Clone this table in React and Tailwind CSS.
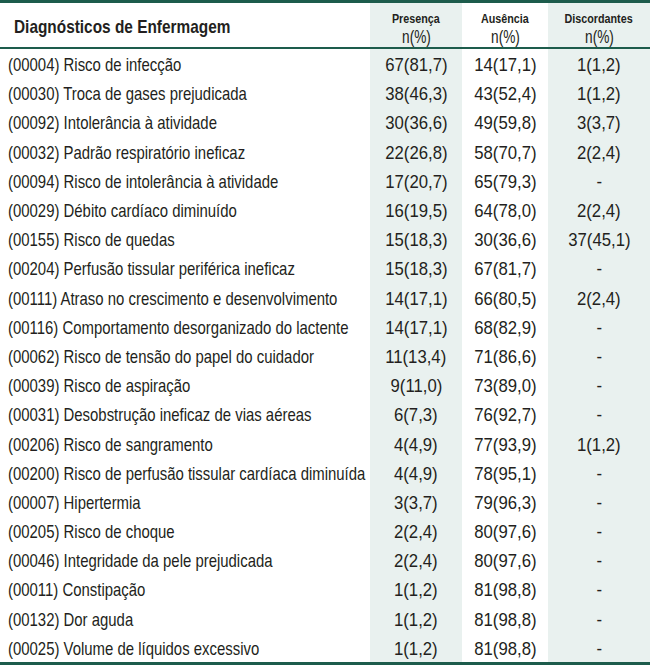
import React from "react";

const rows = [
    ["(00004) Risco de infecção", "67(81,7)", "14(17,1)", "1(1,2)"],
    ["(00030) Troca de gases prejudicada", "38(46,3)", "43(52,4)", "1(1,2)"],
    ["(00092) Intolerância à atividade", "30(36,6)", "49(59,8)", "3(3,7)"],
    ["(00032) Padrão respiratório ineficaz", "22(26,8)", "58(70,7)", "2(2,4)"],
    ["(00094) Risco de intolerância à atividade", "17(20,7)", "65(79,3)", "-"],
    ["(00029) Débito cardíaco diminuído", "16(19,5)", "64(78,0)", "2(2,4)"],
    ["(00155) Risco de quedas", "15(18,3)", "30(36,6)", "37(45,1)"],
    ["(00204) Perfusão tissular periférica ineficaz", "15(18,3)", "67(81,7)", "-"],
    ["(00111) Atraso no crescimento e desenvolvimento", "14(17,1)", "66(80,5)", "2(2,4)"],
    ["(00116) Comportamento desorganizado do lactente", "14(17,1)", "68(82,9)", "-"],
    ["(00062) Risco de tensão do papel do cuidador", "11(13,4)", "71(86,6)", "-"],
    ["(00039) Risco de aspiração", "9(11,0)", "73(89,0)", "-"],
    ["(00031) Desobstrução ineficaz de vias aéreas", "6(7,3)", "76(92,7)", "-"],
    ["(00206) Risco de sangramento", "4(4,9)", "77(93,9)", "1(1,2)"],
    ["(00200) Risco de perfusão tissular cardíaca diminuída", "4(4,9)", "78(95,1)", "-"],
    ["(00007) Hipertermia", "3(3,7)", "79(96,3)", "-"],
    ["(00205) Risco de choque", "2(2,4)", "80(97,6)", "-"],
    ["(00046) Integridade da pele prejudicada", "2(2,4)", "80(97,6)", "-"],
    ["(00011) Constipação", "1(1,2)", "81(98,8)", "-"],
    ["(00132) Dor aguda", "1(1,2)", "81(98,8)", "-"],
    ["(00025) Volume de líquidos excessivo", "1(1,2)", "81(98,8)", "-"],
];

// the source uses a condensed face; squeeze Liberation Sans horizontally
const HeadCell = ({ label, shaded }) => (
    <div
        className={`flex flex-col items-center pt-[10px] leading-none whitespace-nowrap ${
            shaded ? "bg-[#e9f1ef]" : ""
        }`}
    >
        <span className="inline-block text-[12.5px] font-bold scale-x-[0.86]">{label}</span>
        <span className="inline-block text-[17.5px] mt-[3px] scale-x-[0.78]">n(%)</span>
    </div>
);

const NumCell = ({ value, shaded }) => (
    <div
        className={`flex items-center justify-center pt-[2px] whitespace-nowrap ${
            shaded ? "bg-[#e9f1ef]" : ""
        }`}
    >
        <span className="inline-block scale-x-[0.88]">{value}</span>
    </div>
);

const App = () => {
    return (
        <div
            className="w-[650px] h-[670px] bg-white text-[#231f20]"
            style={{ fontFamily: '"Liberation Sans", Arial, sans-serif' }}
        >
            <div className="border-t-[3px] border-b-[3px] border-[#1d5c4c]">
                {/* header */}
                <div className="grid grid-cols-[370px_92px_86px_102px] h-[46px] border-b-[2px] border-[#1d5c4c]">
                    <div className="flex items-center pl-[14px] pt-[4px] whitespace-nowrap">
                        <span className="inline-block origin-left scale-x-[0.81] text-[19px] font-bold">
                            Diagnósticos de Enfermagem
                        </span>
                    </div>
                    <HeadCell label="Presença" shaded />
                    <HeadCell label="Ausência" />
                    <HeadCell label="Discordantes" shaded />
                </div>

                {rows.map((r, i) => (
                    <div
                        key={i}
                        className="grid grid-cols-[370px_92px_86px_102px] h-[29.2px] text-[19px] leading-none"
                    >
                        <div className="flex items-center pl-[8px] pt-[2px] whitespace-nowrap">
                            <span className="inline-block origin-left scale-x-[0.785]">{r[0]}</span>
                        </div>
                        <NumCell value={r[1]} shaded />
                        <NumCell value={r[2]} />
                        <NumCell value={r[3]} shaded />
                    </div>
                ))}
            </div>
        </div>
    );
};

export default App;
